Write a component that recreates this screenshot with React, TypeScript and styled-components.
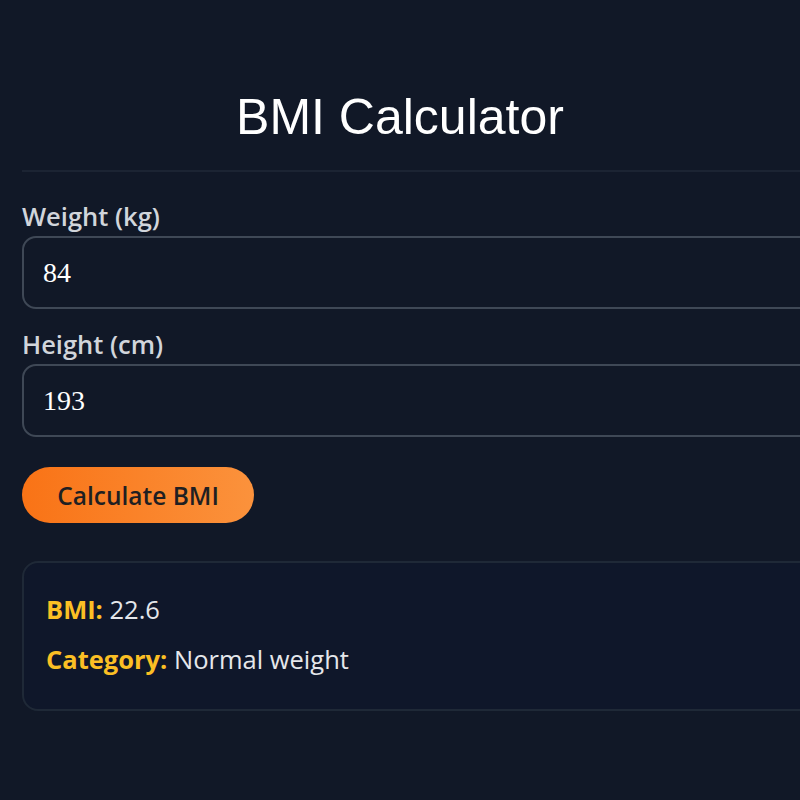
import styled, { createGlobalStyle } from "styled-components";

const GlobalStyle = createGlobalStyle`
  html, body {
    margin: 0;
    padding: 0;
    background: #111827;
    overflow: hidden;
  }
  body {
    font-family: "Open Sans", "Noto Sans", sans-serif;
  }
`;

const Page = styled.div`
  width: 800px;
  height: 800px;
  overflow: hidden;
  background: #111827;
`;

const Title = styled.h1`
  margin: 0;
  padding-top: 88px;
  height: 82px;
  text-align: center;
  font-family: "Liberation Sans", Arial, sans-serif;
  font-weight: 400;
  font-size: 50px;
  line-height: 58px;
  color: #ffffff;
`;

const Form = styled.div`
  margin-left: 22px;
  width: 960px;
  border-top: 2px solid #1c2433;
  padding-top: 28px;
  display: flex;
  flex-direction: column;
`;

const Field = styled.label`
  display: flex;
  flex-direction: column;
  gap: 4px;
  margin-bottom: 19px;
`;

const LabelText = styled.span`
  font-size: 25.5px;
  font-weight: 600;
  line-height: 32px;
  color: #d1d5db;
`;

const Input = styled.input`
  box-sizing: border-box;
  height: 73px;
  padding: 0 19px;
  border: 2px solid #3f4856;
  border-radius: 14px;
  background: #111827;
  color: #ffffff;
  font-family: "Liberation Serif", "Times New Roman", serif;
  font-size: 28px;
  outline: none;
`;

const Button = styled.button`
  align-self: flex-start;
  height: 56px;
  width: 232px;
  margin-top: 11px;
  border: none;
  border-radius: 28px;
  background: linear-gradient(90deg, #f97316, #fb923c);
  color: #1f1f22;
  font-family: "Open Sans", "Noto Sans", sans-serif;
  font-size: 24.5px;
  font-weight: 600;
  cursor: pointer;
`;

const Result = styled.div`
  box-sizing: border-box;
  margin-top: 38px;
  height: 150px;
  padding: 29px 22px;
  border: 2px solid #1f2937;
  border-radius: 16px;
  background: #0f172a;
  display: flex;
  flex-direction: column;
  gap: 16px;
`;

const Line = styled.div`
  font-size: 25.5px;
  line-height: 34px;
  color: #e5e7eb;
`;

const Key = styled.strong`
  font-weight: 700;
  color: #fbbf24;
`;

export default function App() {
  return (
    <Page>
      <GlobalStyle />
      <Title>BMI Calculator</Title>
      <Form>
        <Field>
          <LabelText>Weight (kg)</LabelText>
          <Input type="text" defaultValue="84" />
        </Field>
        <Field>
          <LabelText>Height (cm)</LabelText>
          <Input type="text" defaultValue="193" />
        </Field>
        <Button>Calculate BMI</Button>
        <Result>
          <Line>
            <Key>BMI:</Key> 22.6
          </Line>
          <Line>
            <Key>Category:</Key> Normal weight
          </Line>
        </Result>
      </Form>
    </Page>
  );
}
